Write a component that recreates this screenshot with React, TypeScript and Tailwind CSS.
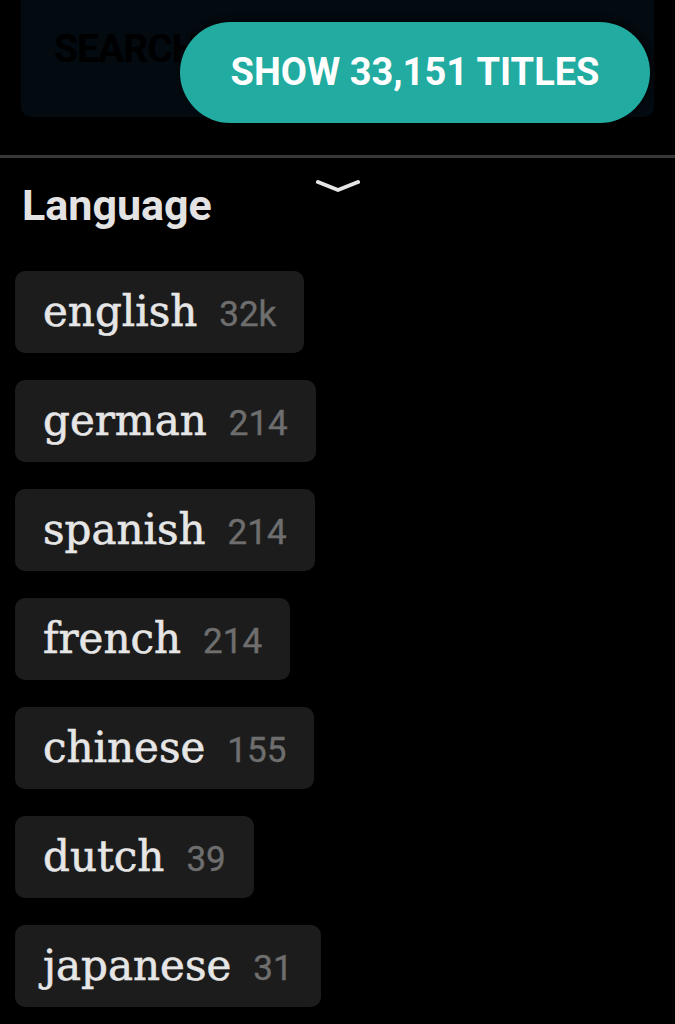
import React from 'react';

const languages = [
  { name: 'english', count: '32k' },
  { name: 'german', count: '214' },
  { name: 'spanish', count: '214' },
  { name: 'french', count: '214' },
  { name: 'chinese', count: '155' },
  { name: 'dutch', count: '39' },
  { name: 'japanese', count: '31' },
];

const Chip = ({ name, count }: { name: string; count: string }) => (
  <div className="self-start flex items-baseline gap-[22px] h-[82px] pl-[28px] pr-[28px] pt-[20px] rounded-[10px] bg-[#1c1c1c]">
    <span className="font-['DejaVu_Serif',serif] text-[42px] leading-none text-[#e6e6e6] [-webkit-text-stroke:0.6px_#e6e6e6]">{name}</span>
    <span className="font-['Roboto',sans-serif] text-[35px] leading-none text-[#6e6e6e] [-webkit-text-stroke:0.4px_#6e6e6e]">{count}</span>
  </div>
);

export default function App() {
  return (
    <div className="w-[675px] h-[1024px] bg-black overflow-hidden font-['Roboto',sans-serif]">
      <div className="relative h-[155px]">
        <div className="mx-[21px] h-[117px] rounded-b-[10px] bg-[#030a10] pl-[33px] pt-[30px]">
          <span className="text-[39px] font-bold tracking-tight leading-none text-black">SEARCH</span>
        </div>
        <button className="absolute left-[180px] top-[22px] w-[470px] h-[101px] rounded-full bg-[#22aba0] text-white text-[38px] font-bold shadow-[2px_-2px_6px_rgba(0,0,0,0.6)]">
          SHOW 33,151 TITLES
        </button>
      </div>
      <div className="h-[3px] bg-[#383838]" />
      <div className="relative px-[22px] pt-[26px]">
        <svg className="absolute left-[316px] top-[21px]" width="44" height="16" viewBox="0 0 44 16">
          <path d="M2 3 L22 11 L42 3" fill="none" stroke="#e6e6e6" strokeWidth="4" strokeLinecap="round" strokeLinejoin="round" />
        </svg>
        <h2 className="text-[43px] font-bold leading-none text-[#e3e3e3]">Language</h2>
      </div>
      <div className="flex flex-col gap-[27px] pl-[15px] pt-[44px]">
        {languages.map((l) => (
          <Chip key={l.name} name={l.name} count={l.count} />
        ))}
      </div>
    </div>
  );
}
